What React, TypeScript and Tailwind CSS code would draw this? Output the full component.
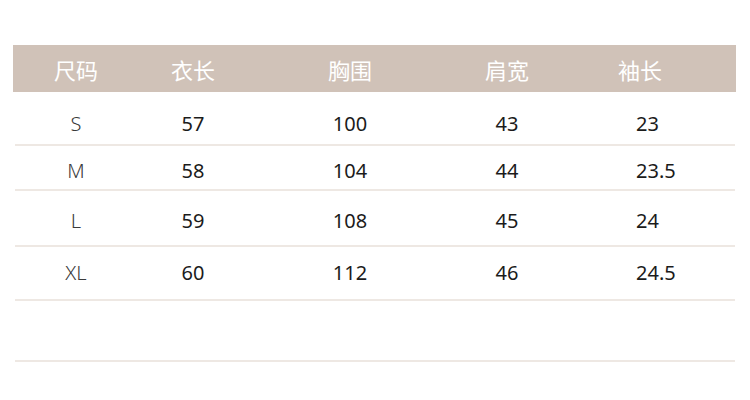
import React from "react";

// ─── Data ──────────────────────────────────────────────────────────────────

const headers = ["尺码", "衣长", "胸围", "肩宽", "袖长"];

interface SizeRow { size: string; length: string; chest: string; shoulder: string; sleeve: string; h: string; pt: string; }

const rows: SizeRow[] = [
  { size: "S", length: "57", chest: "100", shoulder: "43", sleeve: "23", h: "h-[54px]", pt: "pt-[12px]" },
  { size: "M", length: "58", chest: "104", shoulder: "44", sleeve: "23.5", h: "h-[45px]", pt: "pt-[6px]" },
  { size: "L", length: "59", chest: "108", shoulder: "45", sleeve: "24", h: "h-[56px]", pt: "pt-[6px]" },
  { size: "XL", length: "60", chest: "112", shoulder: "46", sleeve: "24.5", h: "h-[54px]", pt: "pt-0" },
];

// column widths: centers at 63 / 180 / 337 / 494, last col text starts at 623
const colW = ["w-[126px]", "w-[108px]", "w-[206px]", "w-[108px]", "w-[158px]"];

export default function App() {
  return (
    <div className="w-[750px] h-[400px] bg-white pt-[45px] pl-[13px] font-['Noto_Sans','Noto_Sans_CJK_SC',sans-serif]">
      {/* Header */}
      <div className="flex w-[723px] h-[47px] items-center bg-[#d0c2b8]">
        {headers.map((h, i) => (
          <div key={h} className={`${colW[i]} text-center text-white text-[22px] font-normal font-['Noto_Sans_CJK_SC',sans-serif] leading-none`}>{h}</div>
        ))}
      </div>

      {/* Body */}
      <div className="ml-[2px] w-[720px]">
        {rows.map((r) => (
          <div key={r.size} className={`flex items-center border-b-2 border-[#eee8e3] ${r.h} ${r.pt} text-[20px] leading-none`}>
            <div className={`${colW[0]} -ml-[2px] text-center font-light text-[#3a3a3a]`}>{r.size}</div>
            <div className={`${colW[1]} text-center text-[#1b1b1b]`}>{r.length}</div>
            <div className={`${colW[2]} text-center text-[#1b1b1b]`}>{r.chest}</div>
            <div className={`${colW[3]} text-center text-[#1b1b1b]`}>{r.shoulder}</div>
            <div className={`${colW[4]} pl-[75px] text-left text-[#1b1b1b]`}>{r.sleeve}</div>
          </div>
        ))}
        <div className="h-[61px] border-b-2 border-[#eee8e3]" />
      </div>
    </div>
  );
}
